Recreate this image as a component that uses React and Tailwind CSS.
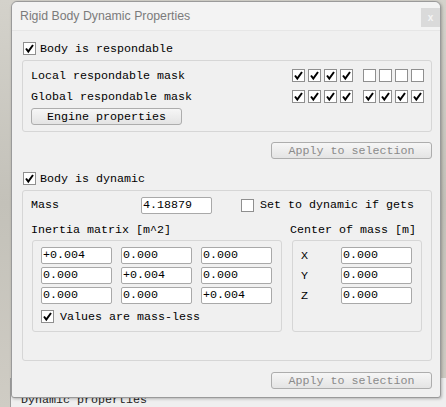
import React from 'react';

const mono = { fontFamily: '"Liberation Mono", "DejaVu Sans Mono", monospace' };

const Check = ({ checked = true }) => (
  <span className="flex h-[13px] w-[13px] shrink-0 items-center justify-center border border-[#8f8f8f] bg-white">
    {checked && (
      <svg width="11" height="11" viewBox="0 0 11 11">
        <path d="M2 5.5 L4.3 8.5 L9 2" fill="none" stroke="#000" strokeWidth="2" />
      </svg>
    )}
  </span>
);

const Field = ({ value, w = 'w-[71px]' }) => (
  <div className={`${w} h-[17px] shrink-0 rounded-[2px] border border-[#a9a9a9] bg-white pl-[1px] leading-[15px] text-black`}>
    {value}
  </div>
);

const Button = ({ children, disabled, className = '' }) => (
  <div
    className={`flex h-[17px] items-center justify-center rounded-[3px] border border-[#adadad] bg-gradient-to-b from-[#f6f6f6] to-[#e4e4e4] ${
      disabled ? 'text-[#8a8a8a]' : 'text-black'
    } ${className}`}
  >
    {children}
  </div>
);

const Mask = ({ bits }) => (
  <div className="flex gap-[3px]">
    {bits.map((b, i) => (
      <Check key={i} checked={b} />
    ))}
  </div>
);

const matrix = [
  ['+0.004', '0.000', '0.000'],
  ['0.000', '+0.004', '0.000'],
  ['0.000', '0.000', '+0.004'],
];

export default function App() {
  return (
    <div className="relative h-[407px] w-[446px] overflow-hidden bg-gradient-to-b from-[#d4d2cb] via-[#c3c1b9] to-[#cfccc4] text-[11.67px]" style={mono}>
      {/* panel behind the dialog */}
      <div className="absolute bottom-0 left-[10px] right-0 top-[378px] border-l border-[#9c9c9c] bg-[#efefef]">
        <div className="pl-[10px] pt-[15px] leading-[14px] text-[#222]">Dynamic properties</div>
      </div>

      {/* dialog window */}
      <div className="absolute left-[11px] top-[1px] h-[397px] w-[430px] rounded-t-[6px] rounded-b-[3px] border border-[#9a9a9a] bg-[#f0f0f0] shadow-[1px_1px_3px_rgba(0,0,0,0.25)]">
        <div className="flex h-[29px] items-start justify-between rounded-t-[6px] border-b border-[#e6e6e6] bg-[#f3f3f3]">
          <span className="pl-[8px] pt-[7px] text-[12.3px] leading-[14px] text-[#7b7b7b]" style={{ fontFamily: '"Liberation Sans", Arial, sans-serif' }}>
            Rigid Body Dynamic Properties
          </span>
          <span className="mt-[6px] flex h-[19px] w-[19px] items-center justify-center bg-[#dadada] text-[10px] font-bold leading-none text-[#f4f4f4]" style={{ fontFamily: '"Liberation Sans", Arial, sans-serif' }}>
            x
          </span>
        </div>

        <div className="pl-[10px] pr-[8px] pt-[11px] leading-[14px] text-black">
          <div className="flex h-[13px] items-center gap-[4px] pl-[1px]">
            <Check />
            <span>Body is respondable</span>
          </div>

          <div className="mt-[5px] h-[72px] rounded-[3px] border border-[#d6d6d6] pl-[8px] pr-[7px] pt-[8px]">
            <div className="flex h-[13px] items-center justify-between">
              <span>Local respondable mask</span>
              <div className="flex gap-[10px]">
                <Mask bits={[true, true, true, true]} />
                <Mask bits={[false, false, false, false]} />
              </div>
            </div>
            <div className="mt-[8px] flex h-[13px] items-center justify-between">
              <span>Global respondable mask</span>
              <div className="flex gap-[10px]">
                <Mask bits={[true, true, true, true]} />
                <Mask bits={[true, true, true, true]} />
              </div>
            </div>
            <Button className="mt-[5px] w-[151px]">Engine properties</Button>
          </div>

          <div className="mt-[10px] flex justify-end">
            <Button disabled className="w-[161px]">Apply to selection</Button>
          </div>

          <div className="mt-[13px] flex h-[13px] items-center gap-[4px] pl-[1px]">
            <Check />
            <span>Body is dynamic</span>
          </div>

          <div className="mt-[5px] h-[171px] rounded-[3px] border border-[#d6d6d6] pl-[8px] pr-[8px] pt-[5px]">
            <div className="flex h-[18px] items-center">
              <span className="w-[110px]">Mass</span>
              <Field value="4.18879" />
              <span className="ml-[29px]">
                <Check checked={false} />
              </span>
              <span className="ml-[6px]">Set to dynamic if gets</span>
            </div>

            <div className="mt-[9px] flex h-[14px] items-center">
              <span className="w-[259px]">Inertia matrix [m^2]</span>
              <span>Center of mass [m]</span>
            </div>

            <div className="mt-[3px] flex gap-[10px] pl-[1px]">
              <div className="h-[92px] w-[250px] rounded-[3px] border border-[#d6d6d6] pl-[8px] pt-[6px]">
                <div className="flex flex-col gap-[3px]">
                  {matrix.map((row, r) => (
                    <div key={r} className="flex gap-[9px]">
                      {row.map((v, c) => (
                        <Field key={c} value={v} />
                      ))}
                    </div>
                  ))}
                </div>
                <div className="mt-[6px] flex h-[13px] items-center gap-[6px]">
                  <Check />
                  <span>Values are mass-less</span>
                </div>
              </div>

              <div className="h-[92px] w-[130px] rounded-[3px] border border-[#d6d6d6] pl-[8px] pt-[6px]">
                <div className="flex flex-col gap-[3px]">
                  {['X', 'Y', 'Z'].map((axis) => (
                    <div key={axis} className="flex items-center">
                      <span className="w-[40px]">{axis}</span>
                      <Field value="0.000" />
                    </div>
                  ))}
                </div>
              </div>
            </div>
          </div>

          <div className="mt-[11px] flex justify-end">
            <Button disabled className="w-[161px]">Apply to selection</Button>
          </div>
        </div>
      </div>
    </div>
  );
}
